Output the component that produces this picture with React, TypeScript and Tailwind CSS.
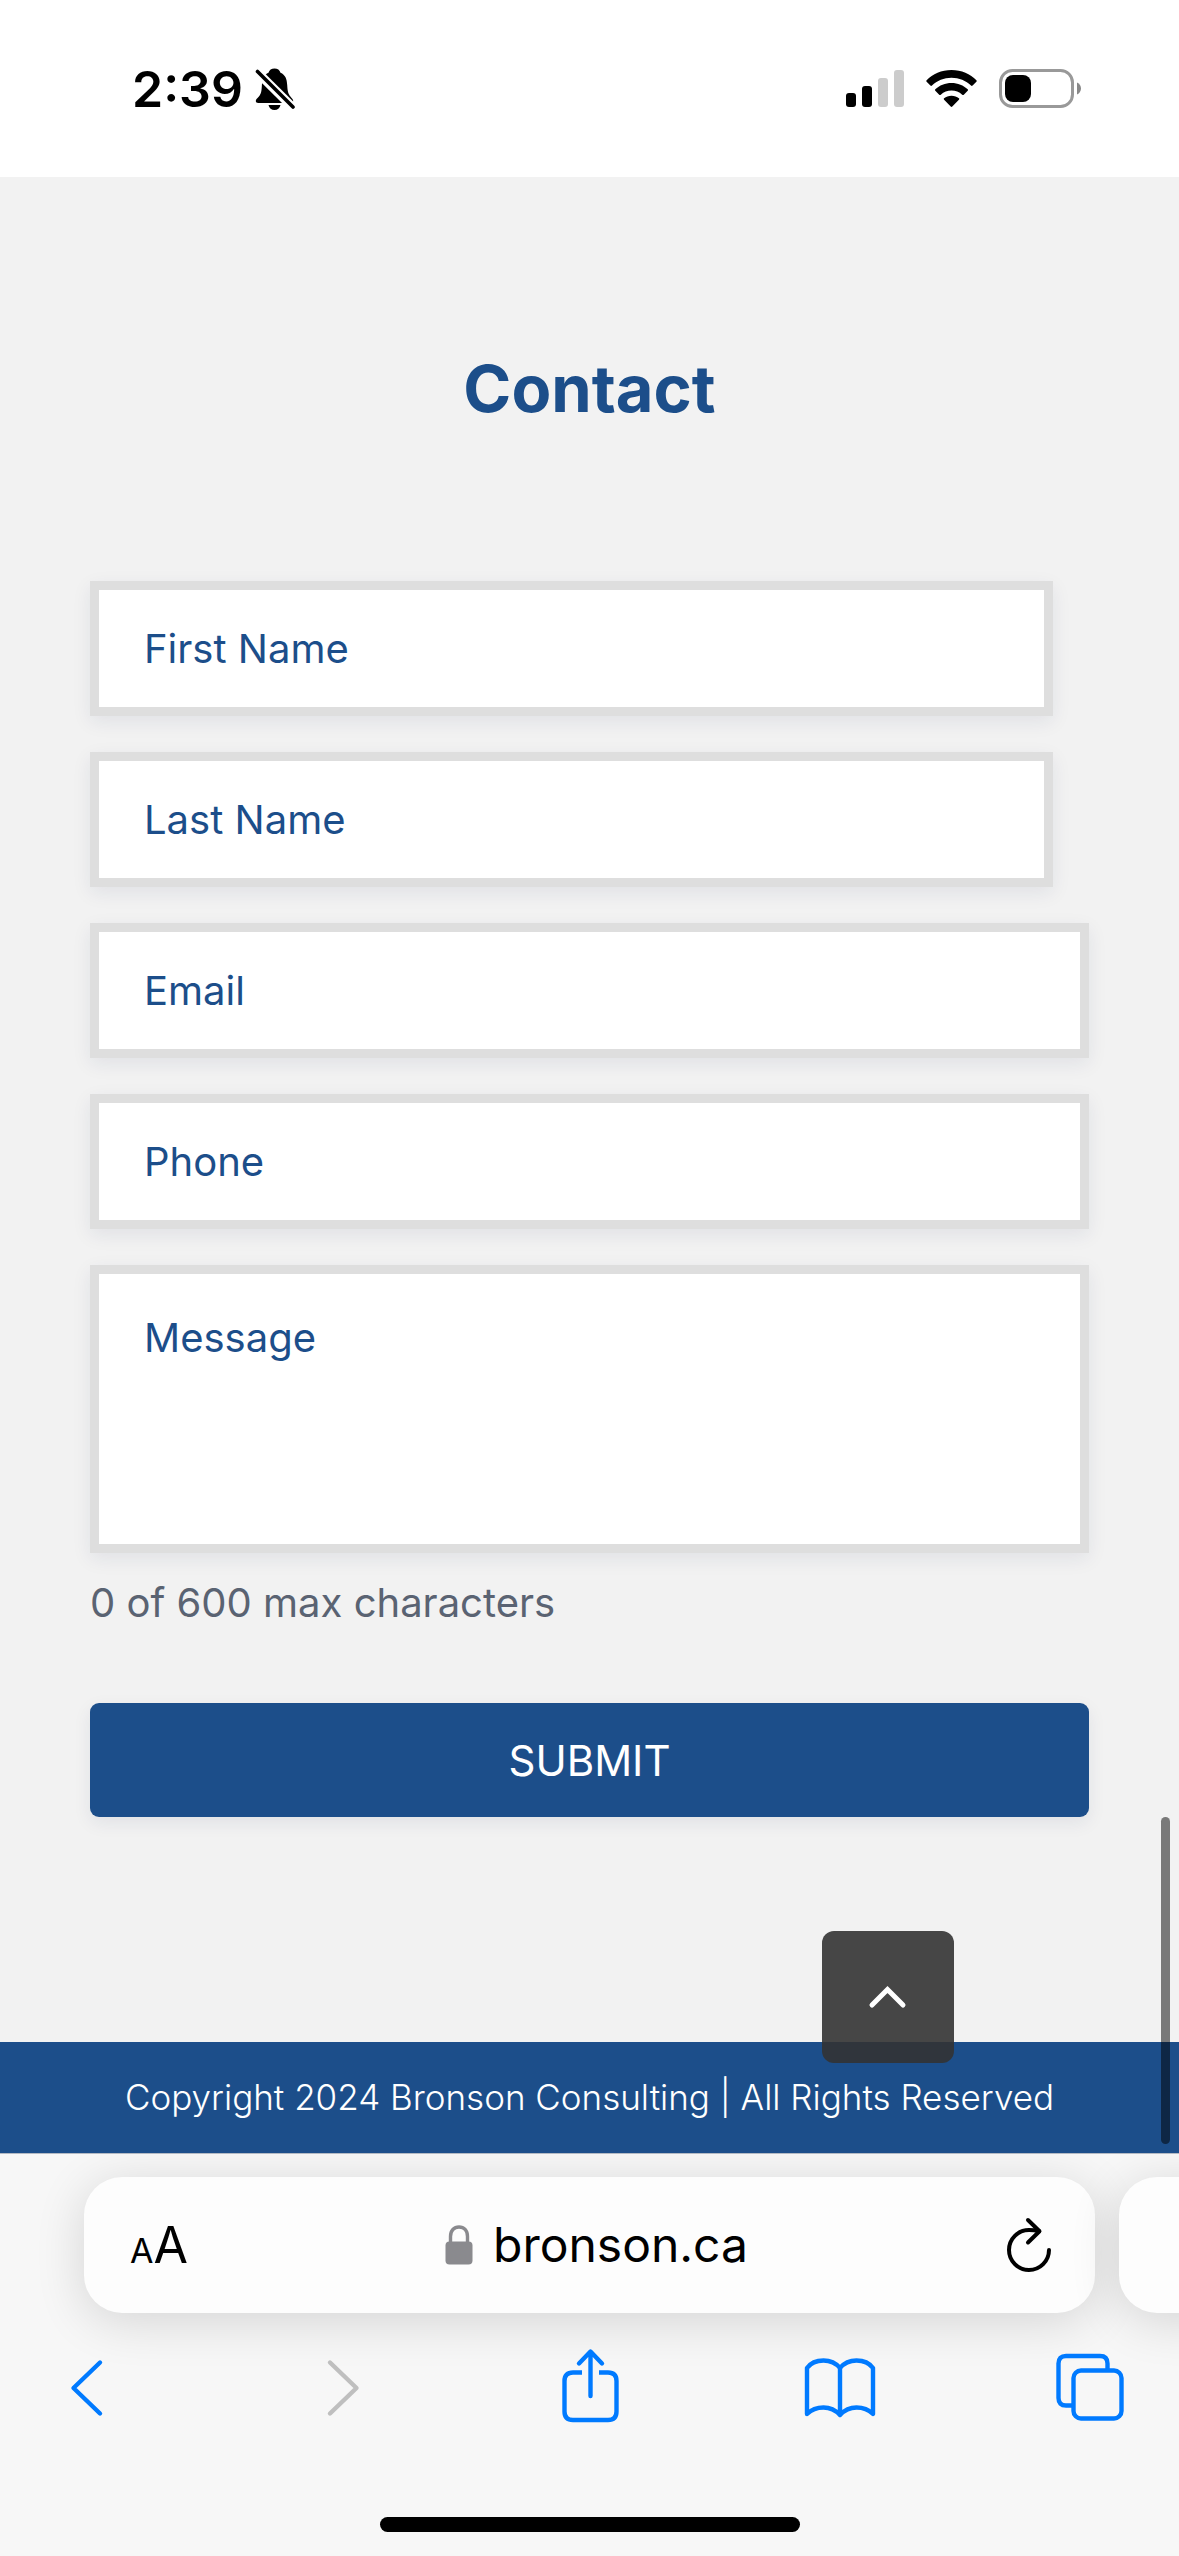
import type { ReactNode } from "react";

const fields = [
  { id: "first-name", label: "First Name", type: "text", className: "mr-9" },
  { id: "last-name", label: "Last Name", type: "text", className: "mr-9" },
  { id: "email", label: "Email", type: "email", className: "" },
  { id: "phone", label: "Phone", type: "tel", className: "" },
];

function StatusBar() {
  return (
    <header className="flex h-[177px] items-center justify-between bg-white pr-[97px] pl-[132px]">
      <div className="flex items-center gap-3">
        <span className="text-[50px] leading-[60px] font-semibold text-black">2:39</span>
        <svg className="h-11 w-10" viewBox="0 0 40 44" aria-hidden="true">
          <path
            d="M19.5 1.5c-3 0-5.3 1.6-6 4.2C9 7.600 7.200 12 6.900 18c-.3 6-.7 8.500-3 11.500C1.800 31.600.8 32.500.8 34c0 1.300.9 2 2.400 2h32.600c1.500 0 2.400-.7 2.400-2 0-1.500-1-2.400-2.800-4.500-2.300-3-2.900-5.500-3.200-11.500-.3-6-1.900-10.400-6.700-12.300-.7-2.600-3-4.200-6-4.200z"
          />
          <path d="M13.500 38h12c-.6 3-3 5-6 5s-5.400-2-6-5z" />
          <path d="M1.500 4.500 38.500 41" stroke="#fff" strokeWidth="9" />
          <path d="M2.500 4.500 38 40" stroke="#000" strokeWidth="3.600" strokeLinecap="round" />
        </svg>
      </div>
      <div className="flex items-center gap-[22px]">
        <svg className="h-10 w-[58px]" viewBox="0 0 58 40" aria-hidden="true">
          <rect x="0" y="24" width="10" height="14" rx="3" />
          <rect x="16" y="17" width="10" height="21" rx="3" />
          <rect x="32" y="9" width="10" height="29" rx="3" fill="#ccc" />
          <rect x="48" y="1" width="10" height="37" rx="3" fill="#ccc" />
        </svg>
        <svg className="h-10 w-[51px]" viewBox="0 0 51 40" aria-hidden="true">
          <path d="M25.500 1C35.500 1 44.300 4.800 50.400 11.200c.5.5.5 1.100 0 1.600l-3.800 3.800c-.5.5-1.100.5-1.600 0C40 11.700 33 8.800 25.500 8.800S11 11.700 6 16.600c-.5.5-1.100.5-1.600 0L.6 12.800c-.5-.5-.5-1.100 0-1.600C6.700 4.800 15.500 1 25.500 1z" />
          <path d="M25.500 13.900c6.300 0 12 2.400 16.200 6.300.5.5.5 1.100 0 1.600l-3.900 3.900c-.5.5-1 .5-1.600 0a15.800 15.800 0 0 0-21.400 0c-.6.5-1.100.5-1.600 0l-3.900-3.900c-.5-.5-.5-1.100 0-1.600 4.200-3.900 9.900-6.300 16.200-6.300z" />
          <path d="M25.500 26.700c2.900 0 5.400 1 7.400 2.600.5.400.5 1 0 1.500l-6.600 6.700c-.5.500-1.100.5-1.600 0l-6.600-6.700c-.5-.5-.5-1.100 0-1.500 2-1.600 4.500-2.600 7.400-2.600z" />
        </svg>
        <svg className="h-10 w-[83px]" viewBox="0 0 83 40" aria-hidden="true">
          <rect x="1.500" y="1.500" width="72" height="36" rx="12" fill="none" stroke="#999" strokeWidth="3" />
          <rect x="6" y="6" width="26" height="27" rx="8" />
          <path d="M78 13.500c2.600 1.200 4 3.500 4 6s-1.400 4.800-4 6z" fill="#888" />
        </svg>
      </div>
    </header>
  );
}

function ContactForm() {
  return (
    <section className="px-[90px] pt-[167px] pb-[225px]">
      <h1 className="text-center text-[65px] leading-[90px] font-bold text-[#1c4e8a]">Contact</h1>
      <form className="mt-[147px] flex flex-col" onSubmit={(e) => e.preventDefault()}>
        <div className="flex flex-col gap-9">
          {fields.map((field) => (
            <div key={field.id} className={field.className}>
              <input
                id={field.id}
                type={field.type}
                aria-label={field.label}
                placeholder={field.label}
                className="block h-[135px] w-full rounded-none border-[9px] border-[#dedede] bg-white px-[45px] text-[40px] text-[#1c4e8a] shadow-[0_6px_18px_rgba(30,40,90,0.08)] placeholder:text-[#1c4e8a] placeholder:opacity-100"
              />
            </div>
          ))}
          <textarea
            id="message"
            aria-label="Message"
            placeholder="Message"
            maxLength={600}
            className="block h-[288px] w-full resize-none rounded-none border-[9px] border-[#dedede] bg-white px-[45px] pt-[34px] text-[40px] leading-[60px] text-[#1c4e8a] shadow-[0_6px_18px_rgba(30,40,90,0.08)] placeholder:text-[#1c4e8a] placeholder:opacity-100"
          />
        </div>
        <p className="mt-5 text-[40px] leading-[60px] text-[#5a6372]">0 of 600 max characters</p>
        <button
          type="submit"
          className="mt-[70px] h-[114px] w-full rounded-[9px] bg-[#1c4e8a] text-[42px] text-white shadow-[0_6px_18px_rgba(30,40,90,0.08)]"
        >
          SUBMIT
        </button>
      </form>
    </section>
  );
}

function ToolbarButton({ label, disabled, children }: { label: string; disabled?: boolean; children: ReactNode }) {
  return (
    <button type="button" aria-label={label} disabled={disabled} className={disabled ? "text-[#bfbfbf]" : "text-[#007aff]"}>
      <svg
        className="h-20 w-[72px]"
        viewBox="0 0 72 80"
        fill="none"
        stroke="currentColor"
        strokeWidth="4.400"
        strokeLinecap="round"
        strokeLinejoin="round"
      >
        {children}
      </svg>
    </button>
  );
}

function BrowserBar() {
  return (
    <div className="flex flex-1 flex-col overflow-hidden border-t border-[#b4bac4] bg-[#f7f7f7]">
      <div className="flex gap-6 pt-[23px] pl-[84px]">
        <div className="flex h-[136px] w-[calc(100%-84px)] shrink-0 items-center justify-between rounded-[38px] bg-[#fdfdfd] pr-[42px] pl-[46px] text-black shadow-[0_8px_50px_rgba(0,0,0,0.14)]">
          <button type="button" aria-label="Page settings" className="flex items-baseline">
            <span className="text-[34px] leading-none">A</span>
            <span className="text-[50px] leading-[60px]">A</span>
          </button>
          <a href="#top" className="flex items-center gap-5">
            <svg className="h-10 w-7" viewBox="0 0 28 40" aria-hidden="true">
              <path d="M5.500 19v-7.500C5.500 5.500 9 2 14 2s8.500 3.500 8.500 9.500V19" fill="none" stroke="#8a8a8e" strokeWidth="3.400" />
              <rect x="0.500" y="16.500" width="27" height="23" rx="4" fill="#8a8a8e" />
            </svg>
            <span className="text-[48px] leading-[60px]">bronson.ca</span>
          </a>
          <button type="button" aria-label="Reload">
            <svg
              className="h-14 w-12"
              viewBox="0 0 48 56"
              fill="none"
              stroke="currentColor"
              strokeWidth="4"
              strokeLinecap="round"
              strokeLinejoin="round"
            >
              <path d="M44 33a20 20 0 1 1-20-20c3.400 0 6.500.3 10 1.200" />
              <path d="M23 3l11.500 11.200L23 25.500" />
            </svg>
          </button>
        </div>
        <div className="h-[136px] w-full shrink-0 rounded-[38px] bg-[#fdfdfd] shadow-[0_8px_50px_rgba(0,0,0,0.14)]" />
      </div>

      <nav className="mt-[33px] flex items-center justify-between px-[53px]">
        <ToolbarButton label="Back">
          <path d="M47 16.500 20.500 42 47 67.500" />
        </ToolbarButton>
        <ToolbarButton label="Forward" disabled>
          <path d="M27 16.500 53.500 42 27 67.500" />
        </ToolbarButton>
        <ToolbarButton label="Share">
          <path d="M28 26.500h-9q-8.500 0-8.500 8.500v30.500q0 8.500 8.500 8.500h35q8.500 0 8.500-8.500V35q0-8.500-8.500-8.500h-9" strokeLinecap="butt" />
          <path d="M36.500 50V6M25 17.500 36.500 5.500 48 17.500" />
        </ToolbarButton>
        <ToolbarButton label="Bookmarks">
          <path d="M36 22C31 16 25 14.500 19.500 14.500S7 16.500 3 22v46c4-4 10.500-6.500 16.500-6.500S31 63.500 36 69c5-5.500 10.500-7.500 16.500-7.500S65 64 69 68V22c-4-5.500-11-7.500-16.500-7.500S41 16 36 22zV69" />
        </ToolbarButton>
        <ToolbarButton label="Tabs">
          <path d="M19 59.500h-7Q4.500 59.500 4.500 52V17.500Q4.500 10 12 10h34q7.500 0 7.500 7.500V24" strokeLinecap="butt" />
          <rect x="19.500" y="24.500" width="48" height="48" rx="7.500" />
        </ToolbarButton>
      </nav>

      <div className="mx-auto mt-auto mb-6 h-[15px] w-[420px] rounded-full bg-black" />
    </div>
  );
}

export default function App() {
  return (
    <div
      id="top"
      className="flex min-h-screen flex-col overflow-hidden bg-[#f2f2f2] font-['Inter','Liberation_Sans',sans-serif]"
    >
      <StatusBar />

      <main className="relative">
        <ContactForm />
        <footer className="bg-[#1c4e8a] px-6 py-[33px] text-center text-[35px] leading-[45px] font-light text-white">
          Copyright 2024 Bronson Consulting | All Rights Reserved
        </footer>

        {/* Back to top */}
        <a
          href="#top"
          aria-label="Back to top"
          className="absolute right-[225px] bottom-[90px] flex size-[132px] items-center justify-center rounded-xl bg-[#333333]/90"
        >
          <svg className="h-6 w-10" viewBox="0 0 40 24" fill="none" stroke="#fff" strokeWidth="5" strokeLinecap="round">
            <path d="M4 20 19.500 4.500 35 20" />
          </svg>
        </a>

        {/* Scroll indicator */}
        <div className="absolute right-[9px] bottom-[9px] h-[327px] w-[9px] rounded-full bg-black/50" />
      </main>

      <BrowserBar />
    </div>
  );
}
